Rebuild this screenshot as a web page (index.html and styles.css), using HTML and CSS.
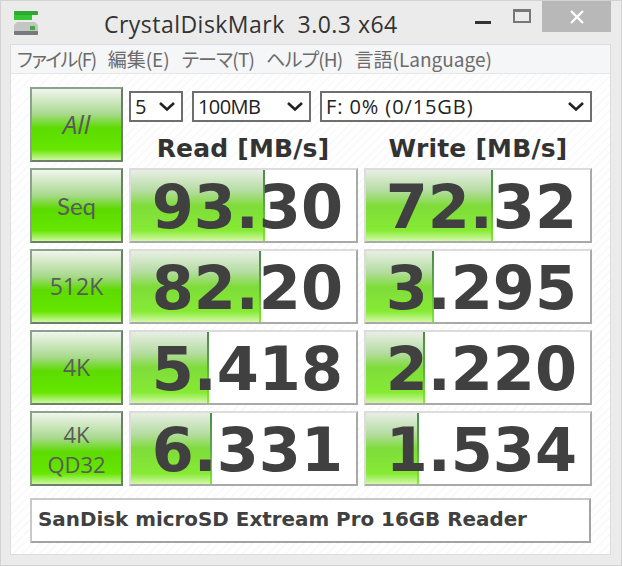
FILE: index.html
```html
<!DOCTYPE html>
<html lang="ja">
<head>
  <meta charset="UTF-8">
  <title>CrystalDiskMark 3.0.3 x64</title>
  <link rel="stylesheet" href="styles.css">
</head>
<body>
  <div class="window">
    <div class="titlebar">
      <svg class="app-icon" width="26" height="26" viewBox="0 0 26 26">
        <rect x="1" y="1" width="24" height="4" rx="1" fill="#2fa82f"/>
        <rect x="1" y="5" width="18" height="5" fill="#35c435"/>
        <path d="M1 15 L4 12 H22 L25 15 V23 L23 25 H3 L1 23 Z" fill="#c4c6c4"/>
        <rect x="1" y="21" width="24" height="4" rx="1" fill="#77797a"/>
        <rect x="17" y="16" width="5" height="4" fill="#45a845"/>
      </svg>
      <div class="title">CrystalDiskMark&nbsp; 3.0.3 x64</div>
      <div class="win-controls">
        <div class="btn-min"></div>
        <div class="btn-max"></div>
        <div class="btn-close">
          <svg width="16" height="16" viewBox="0 0 16 16"><path d="M2 2 L14 14 M14 2 L2 14" stroke="#fff" stroke-width="2.2"/></svg>
        </div>
      </div>
    </div>

    <div class="client">
      <div class="menu">
        <span class="menu-file">ファイル(F)</span>
        <span>編集(E)</span>
        <span class="menu-kana">テーマ(T)</span>
        <span class="menu-kana">ヘルプ(H)</span>
        <span>言語(Language)</span>
      </div>

      <div class="content">
        <div class="top-row">
          <div class="run-btn all">All</div>
          <div class="controls">
            <div class="selects">
              <div class="combo combo-count">5<svg class="chev" width="18" height="11" viewBox="0 0 18 11"><path d="M2 2 L9 8.5 L16 2" fill="none" stroke="#222" stroke-width="2.6"/></svg></div>
              <div class="combo combo-size">100MB<svg class="chev" width="18" height="11" viewBox="0 0 18 11"><path d="M2 2 L9 8.5 L16 2" fill="none" stroke="#222" stroke-width="2.6"/></svg></div>
              <div class="combo combo-drive">F: 0% (0/15GB)<svg class="chev" width="18" height="11" viewBox="0 0 18 11"><path d="M2 2 L9 8.5 L16 2" fill="none" stroke="#222" stroke-width="2.6"/></svg></div>
            </div>
            <div class="heads">
              <div class="head">Read [MB/s]</div>
              <div class="head">Write [MB/s]</div>
            </div>
          </div>
        </div>

        <div class="row">
          <div class="run-btn seq">Seq</div>
          <div class="cell"><div class="bar" style="width:134px"></div><span>93.30</span></div>
          <div class="cell"><div class="bar" style="width:127px"></div><span>72.32</span></div>
        </div>
        <div class="row">
          <div class="run-btn">512K</div>
          <div class="cell"><div class="bar" style="width:130px"></div><span>82.20</span></div>
          <div class="cell"><div class="bar" style="width:68px"></div><span>3.295</span></div>
        </div>
        <div class="row">
          <div class="run-btn">4K</div>
          <div class="cell"><div class="bar" style="width:78px"></div><span>5.418</span></div>
          <div class="cell"><div class="bar" style="width:59px"></div><span>2.220</span></div>
        </div>
        <div class="row">
          <div class="run-btn two-line">4K<br>QD32</div>
          <div class="cell"><div class="bar" style="width:81px"></div><span>6.331</span></div>
          <div class="cell"><div class="bar" style="width:53px"></div><span>1.534</span></div>
        </div>

        <div class="comment">SanDisk microSD Extream Pro 16GB Reader</div>
      </div>
    </div>
  </div>
</body>
</html>
```

FILE: styles.css
```css
* {
  box-sizing: border-box;
}
html, body {
  margin: 0;
  padding: 0;
}
body {
  width: 622px;
  height: 566px;
  overflow: hidden;
  font-family: "Open Sans", "Noto Sans CJK JP", sans-serif;
}
.window {
  width: 622px;
  height: 566px;
  background: #ebebeb;
  border: 1px solid #d2d2d2;
  padding: 0 10px 10px 9px;
  display: flex;
  flex-direction: column;
}
.titlebar {
  height: 43px;
  display: flex;
  flex: none;
  position: relative;
}
.app-icon {
  margin: 9px 0 0 3px;
}
.title {
  margin: 7px 0 0 65px;
  font-size: 23px;
  line-height: 33px;
  color: #333;
  letter-spacing: 0.47px;
  white-space: nowrap;
}
.win-controls {
  margin-left: auto;
  display: flex;
}
.btn-min {
  width: 16px;
  height: 3px;
  margin: 20px 0 0 0;
  background: #333;
}
.btn-max {
  width: 18px;
  height: 14px;
  margin: 8px 0 0 22px;
  border: 2px solid #777;
  border-top-width: 3px;
}
.btn-close {
  width: 69px;
  height: 31px;
  margin: 0 0 0 11px;
  background: #b8b8b8;
  display: flex;
  align-items: center;
  justify-content: center;
}
.client {
  flex: 1;
  width: 601px;
  border: 1px solid #dcdcdc;
  background: #fff;
  display: flex;
  flex-direction: column;
}
.menu {
  height: 29px;
  flex: none;
  background: #f5f6f7;
  border-bottom: 1px solid #e6e6e6;
  padding-left: 6px;
  display: flex;
  gap: 12px;
  font-family: "Noto Sans CJK JP", sans-serif;
  font-feature-settings: "palt";
  font-size: 19px;
  line-height: 27px;
  color: #6b6b6b;
  white-space: nowrap;
}
.menu-file {
  letter-spacing: -1.5px;
}
.menu-kana {
  letter-spacing: -0.8px;
}
.content {
  flex: 1;
  padding: 13px 0 0 19px;
  background: repeating-linear-gradient(135deg, #fff 0, #fff 4px, #fafafa 4px, #fafafa 6px);
}
.top-row {
  display: flex;
  gap: 6px;
  height: 81px;
}
.run-btn {
  width: 93px;
  height: 75px;
  flex: none;
  border: 2px solid;
  border-color: #8ca28c #6c7f68 #6c7f68 #8ca28c;
  background: linear-gradient(#f1f5ee 0%, #a9d98f 35%, #5cdb00 55%, #66e600 85%, #cdf7a0 100%);
  color: #5a5a5a;
  font-size: 23px;
  line-height: 71px;
  text-align: center;
}
.all {
  font-style: italic;
  font-size: 26px;
}
.seq {
  font-family: "Lato", sans-serif;
  font-size: 24px;
}
.two-line {
  font-size: 22px;
  line-height: 30px;
  padding-top: 6px;
}
.controls {
  flex: none;
  width: 463px;
}
.selects {
  display: flex;
  margin-top: 4px;
  gap: 9px;
}
.combo {
  height: 31px;
  border: 2px solid #6e6e6e;
  background: #fff;
  padding: 0 0 0 4px;
  font-size: 20px;
  line-height: 26px;
  color: #222;
  display: flex;
  align-items: center;
  justify-content: space-between;
}
.combo-count {
  width: 54px;
}
.combo-size {
  width: 119px;
  letter-spacing: -0.6px;
}
.combo-drive {
  width: 272px;
  letter-spacing: 0.9px;
}
.chev {
  margin-right: 5px;
}
.heads {
  display: flex;
  gap: 7px;
}
.head {
  width: 228px;
  height: 46px;
  text-align: center;
  font-family: "DejaVu Sans", sans-serif;
  font-weight: bold;
  font-size: 25px;
  letter-spacing: 0.2px;
  line-height: 54px;
  color: #333;
  white-space: nowrap;
}
.row {
  display: flex;
  height: 75px;
  margin-bottom: 6px;
}
.cell {
  width: 229px;
  height: 75px;
  margin-left: 6px;
  flex: none;
  position: relative;
  border: 2px solid;
  border-color: #dcdcdc #a9a9a9 #a9a9a9 #dcdcdc;
  background: #fff;
  padding-right: 13px;
  text-align: right;
  font-family: "DejaVu Sans", sans-serif;
  font-weight: bold;
  font-size: 60.5px;
  line-height: 75px;
  color: #404040;
}
.cell + .cell {
  width: 228px;
}
.cell span {
  position: relative;
}
.bar {
  position: absolute;
  left: 0;
  top: 0;
  bottom: 0;
  background: linear-gradient(#e8efe4 0%, #b4dca0 30%, #7fdc3a 50%, #86ea34 85%, #d4f9a8 100%);
  border-right: 2px solid;
  border-image: linear-gradient(#4d8a4d 0%, #5aa84a 50%, #7ef02a 100%) 1;
}
.comment {
  width: 561px;
  height: 45px;
  margin-top: 12px;
  border: 2px solid;
  border-color: #c9c9c9 #a3a3a3 #a3a3a3 #c9c9c9;
  background: #fff;
  padding-left: 6px;
  font-family: "DejaVu Sans", sans-serif;
  font-weight: bold;
  font-size: 19.9px;
  line-height: 40px;
  color: #404040;
  white-space: nowrap;
}
```
